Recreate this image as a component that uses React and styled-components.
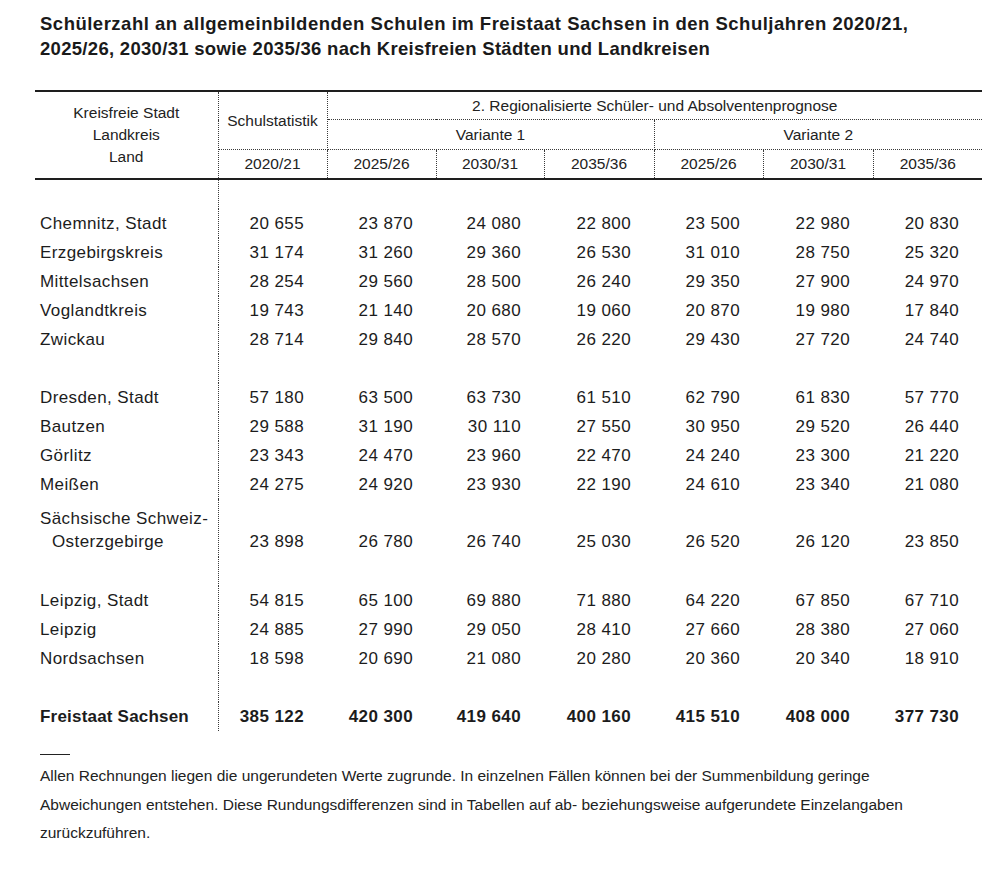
import React from "react";
import styled, { createGlobalStyle } from "styled-components";

const Global = createGlobalStyle`
  html, body { margin: 0; padding: 0; background: #fff; }
  body { font-family: "Liberation Sans", Arial, sans-serif; color: #1c1c1c; }
`;

const Page = styled.div`
  width: 1000px;
  height: 869px;
  box-sizing: border-box;
  padding: 11px 0 0 0;
  background: #fff;
`;

const Title = styled.h1`
  margin: 0 0 29px 40px;
  font-size: 18.5px;
  line-height: 25px;
  font-weight: 700;
  white-space: nowrap;
  letter-spacing: 0.5px;
  color: #1a1a1a;
`;

const TitleLine = styled.span`
  display: block;
  letter-spacing: ${(p) => p.$ls || "0.5px"};
`;

const Table = styled.table`
  margin-left: 35px;
  width: 947px;
  table-layout: fixed;
  border-collapse: collapse;
  border-top: 2px solid #1e1e1e;
`;

const GRAY = "1px dotted #3a3a3a";

const Th = styled.th`
  font-weight: 400;
  font-size: 15.5px;
  line-height: ${(p) => (p.$tight ? "22px" : "26px")};
  height: ${(p) => (p.$h ? `${p.$h}px` : "auto")};
  padding: 0;
  text-align: center;
  vertical-align: middle;
  color: #222;
  border-right: ${(p) => (p.$last ? "none" : GRAY)};
  border-bottom: ${(p) => (p.$thick ? "2px solid #1e1e1e" : p.$line ? GRAY : "none")};
`;

const Row = styled.tr`
  height: ${(p) => (p.$tall ? 58 : 29)}px;
`;

const Spacer = styled.tr`
  height: ${(p) => p.$h || 29}px;
`;

const LabelCell = styled.td`
  padding: ${(p) => (p.$tall ? "0 0 4px 5px" : "0 0 0 5px")};
  font-size: 17px;
  line-height: ${(p) => (p.$tall ? "23px" : "29px")};
  vertical-align: ${(p) => (p.$tall ? "bottom" : "middle")};
  font-weight: ${(p) => (p.$bold ? 700 : 400)};
  letter-spacing: ${(p) => (p.$bold ? "0.2px" : "0.4px")};
  white-space: nowrap;
  border-right: ${GRAY};
`;

const Indent = styled.span`
  display: block;
  padding-left: 12px;
`;

const NumCell = styled.td`
  padding: ${(p) => (p.$tall ? "0 23px 4px 0" : "0 23px 0 0")};
  font-size: 17px;
  line-height: ${(p) => (p.$tall ? "23px" : "29px")};
  vertical-align: ${(p) => (p.$tall ? "bottom" : "middle")};
  text-align: right;
  font-weight: ${(p) => (p.$bold ? 700 : 400)};
  letter-spacing: 0.4px;
  white-space: nowrap;
`;

const Footnote = styled.div`
  margin: 23px 0 0 40px;
`;

const Rule = styled.div`
  width: 30px;
  height: 1px;
  background: #222;
  margin-bottom: 7px;
`;

const NoteText = styled.p`
  margin: 0;
  font-size: 15.5px;
  line-height: 28.5px;
  white-space: nowrap;
  color: #222;
`;

const cols = [183, 109, 109, 108, 110, 109, 110, 109];

const groups = [
  [
    ["Chemnitz, Stadt", ["20 655", "23 870", "24 080", "22 800", "23 500", "22 980", "20 830"]],
    ["Erzgebirgskreis", ["31 174", "31 260", "29 360", "26 530", "31 010", "28 750", "25 320"]],
    ["Mittelsachsen", ["28 254", "29 560", "28 500", "26 240", "29 350", "27 900", "24 970"]],
    ["Voglandtkreis", ["19 743", "21 140", "20 680", "19 060", "20 870", "19 980", "17 840"]],
    ["Zwickau", ["28 714", "29 840", "28 570", "26 220", "29 430", "27 720", "24 740"]],
  ],
  [
    ["Dresden, Stadt", ["57 180", "63 500", "63 730", "61 510", "62 790", "61 830", "57 770"]],
    ["Bautzen", ["29 588", "31 190", "30 110", "27 550", "30 950", "29 520", "26 440"]],
    ["Görlitz", ["23 343", "24 470", "23 960", "22 470", "24 240", "23 300", "21 220"]],
    ["Meißen", ["24 275", "24 920", "23 930", "22 190", "24 610", "23 340", "21 080"]],
    [["Sächsische Schweiz-", "Osterzgebirge"], ["23 898", "26 780", "26 740", "25 030", "26 520", "26 120", "23 850"]],
  ],
  [
    ["Leipzig, Stadt", ["54 815", "65 100", "69 880", "71 880", "64 220", "67 850", "67 710"]],
    ["Leipzig", ["24 885", "27 990", "29 050", "28 410", "27 660", "28 380", "27 060"]],
    ["Nordsachsen", ["18 598", "20 690", "21 080", "20 280", "20 360", "20 340", "18 910"]],
  ],
];

const total = ["385 122", "420 300", "419 640", "400 160", "415 510", "408 000", "377 730"];
const years = ["2025/26", "2030/31", "2035/36"];

function DataRow({ label, values, bold }) {
  const tall = Array.isArray(label);
  return (
    <Row $tall={tall}>
      <LabelCell $tall={tall} $bold={bold}>
        {tall ? (
          <>
            {label[0]}
            <Indent>{label[1]}</Indent>
          </>
        ) : (
          label
        )}
      </LabelCell>
      {values.map((v, i) => (
        <NumCell key={i} $tall={tall} $bold={bold}>
          {v}
        </NumCell>
      ))}
    </Row>
  );
}

export default function App() {
  return (
    <Page>
      <Global />
      <Title>
        <TitleLine>Schülerzahl an allgemeinbildenden Schulen im Freistaat Sachsen in den Schuljahren 2020/21,</TitleLine>
        <TitleLine $ls="0.3px">2025/26, 2030/31 sowie 2035/36 nach Kreisfreien Städten und Landkreisen</TitleLine>
      </Title>
      <Table>
        <colgroup>
          {cols.map((w, i) => (
            <col key={i} style={{ width: w }} />
          ))}
        </colgroup>
        <thead>
          <tr>
            <Th rowSpan={3} $tight $thick>
              Kreisfreie Stadt
              <br />
              Landkreis
              <br />
              Land
            </Th>
            <Th rowSpan={2} $line>
              Schulstatistik
            </Th>
            <Th colSpan={6} $line $last $h={27}>
              2. Regionalisierte Schüler- und Absolventenprognose
            </Th>
          </tr>
          <tr>
            <Th colSpan={3} $line $h={29}>
              Variante 1
            </Th>
            <Th colSpan={3} $line $last>
              Variante 2
            </Th>
          </tr>
          <tr>
            <Th $thick $h={28}>2020/21</Th>
            {years.map((y) => (
              <Th key={"a" + y} $thick>
                {y}
              </Th>
            ))}
            {years.map((y, i) => (
              <Th key={"b" + y} $thick $last={i === 2}>
                {y}
              </Th>
            ))}
          </tr>
        </thead>
        <tbody>
          {groups.map((g, gi) => (
            <React.Fragment key={gi}>
              <Spacer $h={gi === 0 ? 30 : 29}>
                <LabelCell />
                <td colSpan={7} />
              </Spacer>
              {g.map(([label, values], i) => (
                <DataRow key={i} label={label} values={values} />
              ))}
            </React.Fragment>
          ))}
          <Spacer>
            <LabelCell />
            <td colSpan={7} />
          </Spacer>
          <DataRow label="Freistaat Sachsen" values={total} bold />
        </tbody>
      </Table>
      <Footnote>
        <Rule />
        <NoteText>
          Allen Rechnungen liegen die ungerundeten Werte zugrunde. In einzelnen Fällen können bei der Summenbildung geringe
          <br />
          Abweichungen entstehen. Diese Rundungsdifferenzen sind in Tabellen auf ab- beziehungsweise aufgerundete Einzelangaben
          <br />
          zurückzuführen.
        </NoteText>
      </Footnote>
    </Page>
  );
}
